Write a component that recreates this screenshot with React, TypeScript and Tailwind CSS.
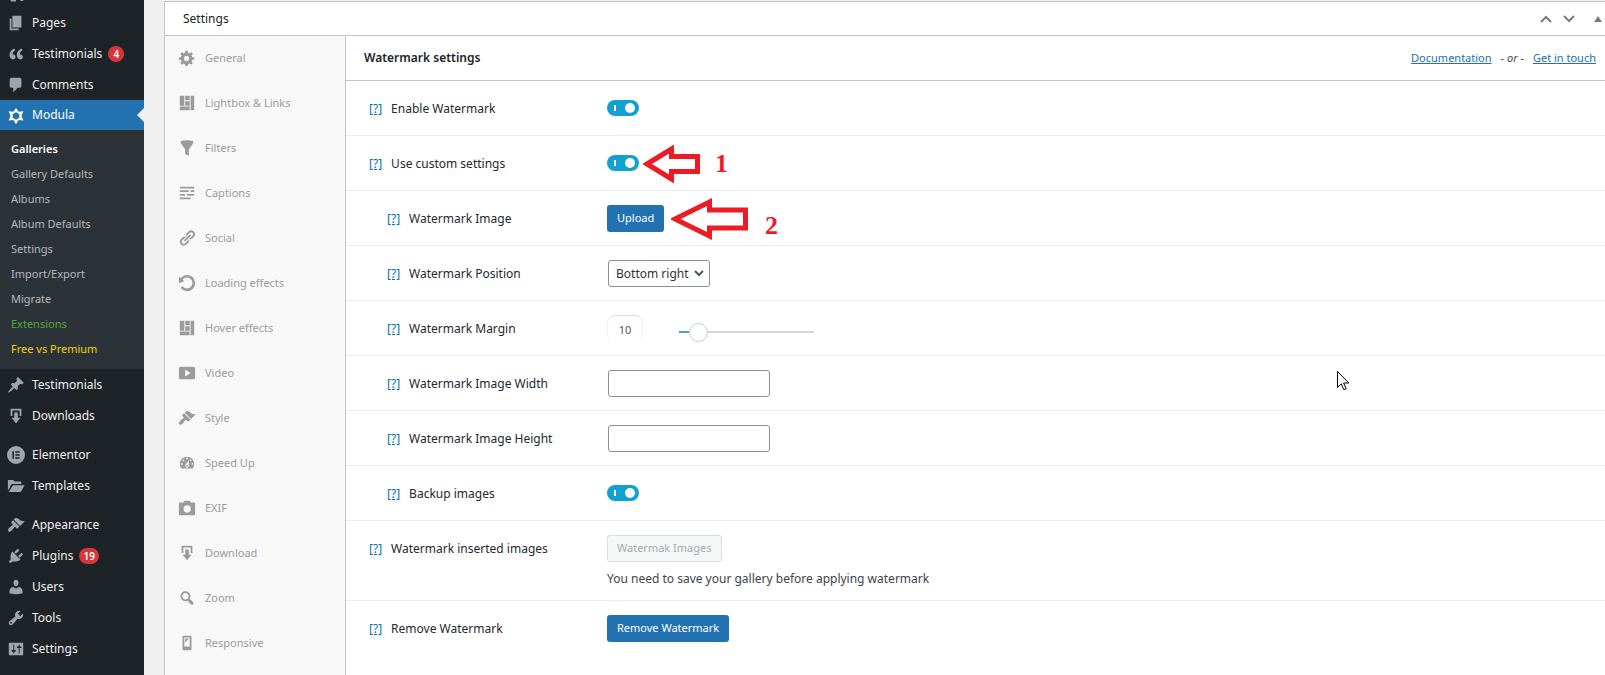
import React, { useState } from 'react';

const paths = {
  page: 'M6 15V2h10v13H6zm-1 1h8v2H3V5h2v11z',
  quote:
    'M9.49 13.22c0-.74-.2-1.38-.61-1.9-.62-.78-1.83-.88-2.53-.72-.29-1.65 1.11-3.75 2.92-4.65L7.88 4c-2.73 1.3-5.42 4.28-4.96 8.05C3.21 14.43 4.59 16 6.54 16c.85 0 1.56-.25 2.12-.75s.83-1.18.83-2.03zm8.05 0c0-.74-.2-1.38-.61-1.9-.63-.78-1.83-.88-2.53-.72-.29-1.65 1.11-3.75 2.92-4.65L15.93 4c-2.73 1.3-5.41 4.28-4.95 8.05.29 2.38 1.66 3.95 3.61 3.95.85 0 1.56-.25 2.12-.75s.83-1.18.83-2.03z',
  comment:
    'M5 2h9c1.1 0 2 .9 2 2v7c0 1.1-.9 2-2 2h-2l-5 5v-5H5c-1.1 0-2-.9-2-2V4c0-1.1.9-2 2-2z',
  modula:
    'M10 0l2.9 4.2 5.3-.5-2.2 5 2.2 5.1-5.3-.4L10 18l-2.9-4.6-5.3.4L4 8.7l-2.2-5 5.3.5zM10 4.600L6.300 6.700v4.200L10 13l3.700-2.100V6.700z',
  pin: 'M10.44 3.02l1.82-1.82 6.36 6.35-1.83 1.82c-1.05-.68-2.48-.57-3.41.36l-.75.75c-.92.93-1.04 2.35-.35 3.41l-1.83 1.82-2.41-2.41-2.8 2.79c-.42.42-3.38 2.71-3.8 2.29s1.86-3.39 2.28-3.81l2.79-2.79L4.1 9.36l1.83-1.82c1.05.69 2.48.57 3.4-.36l.75-.75c.93-.92 1.05-2.35.36-3.41z',
  download: 'M14.01 4v6h2V2H4v8h2.01V4h8zm-2 2v6h3l-5 6-5-6h3V6h4z',
  elementor:
    'M10 0a10 10 0 1 0 0 20a10 10 0 1 0 0-20zM6 5.800h1.700v8.400H6zM9.200 5.800H14v1.700H9.200zM9.200 9.150H14v1.700H9.200zM9.200 12.500H14v1.700H9.200z',
  folder:
    'M1 15.500V4.500C1 3.700 1.500 3.300 2.200 3.300h4.600l1.700 1.800h6.300c.8 0 1.200.5 1.200 1.200v1.500H6.300c-.8 0-1.300.3-1.700.9zM2 16.600l4-6.500c.3-.5.7-.8 1.300-.8H19.500l-3.500 6.300c-.4.700-.8 1-1.500 1z',
  brush:
    'M14.48 11.06L7.41 3.99l1.5-1.5c.5-.56 2.3-.47 3.51.32 1.21.8 1.43 1.28 2.91 2.1 1.18.64 2.45 1.26 4.45.85zm-.71.71L6.7 4.7 4.93 6.47c-.39.39-.39 1.02 0 1.41l1.06 1.06c.39.39.39 1.03 0 1.42-.6.6-1.43 1.11-2.21 1.69-.35.26-.7.53-1.01.84C1.43 14.23.4 16.08 1.4 17.07c.99 1 2.84-.03 4.18-1.36.31-.31.58-.66.85-1.02.57-.78 1.08-1.61 1.69-2.21.39-.39 1.02-.39 1.41 0l1.06 1.06c.39.39 1.02.39 1.41 0z',
  plug: 'M13.11 4.36L9.87 7.6 8 5.73l3.24-3.24c.35-.34 1.05-.2 1.56.32.52.51.66 1.21.31 1.55zm-8 1.77l.91-1.12 9.01 9.01-1.19.84c-.71.71-2.63 1.16-3.82 1.16H6.14L4.9 17.26c-.59.59-1.54.59-2.12 0-.59-.58-.59-1.53 0-2.12l1.24-1.24v-3.88c0-1.13.4-3.19 1.09-3.89zm7.26 3.97l3.24-3.24c.34-.35 1.04-.21 1.55.31.52.51.66 1.21.31 1.55l-3.24 3.25z',
  user: 'M10 9.25c-2.27 0-2.73-3.44-2.73-3.44C7 4.02 7.82 2 9.97 2c2.16 0 2.98 2.02 2.71 3.81 0 0-.41 3.44-2.68 3.44zm0 2.57L12.72 10c2.39 0 4.52 2.33 4.52 4.53v2.49s-3.65 1.13-7.24 1.13c-3.65 0-7.24-1.13-7.24-1.13v-2.49c0-2.25 1.94-4.48 4.47-4.48z',
  wrench:
    'M16.68 9.77c-1.34 1.34-3.3 1.67-4.95.99l-5.41 6.52c-.99.99-2.59.99-3.58 0s-.99-2.59 0-3.57l6.52-5.42c-.68-1.65-.35-3.61.99-4.95 1.28-1.28 3.12-1.62 4.72-1.06l-2.89 2.89 2.82 2.82 2.86-2.87c.53 1.58.18 3.39-1.08 4.65zM3.81 16.21c.4.39 1.04.39 1.43 0 .4-.4.4-1.04 0-1.43-.39-.4-1.03-.4-1.43 0-.39.39-.39 1.03 0 1.43z',
  sliders:
    'M18 16V4c0-.55-.45-1-1-1H3c-.55 0-1 .45-1 1v12c0 .55.45 1 1 1h14c.55 0 1-.45 1-1zM8 11h1c.55 0 1 .45 1 1s-.45 1-1 1H8v1.5c0 .28-.22.5-.5.5s-.5-.22-.5-.5V13H6c-.55 0-1-.45-1-1s.45-1 1-1h1V5.500c0-.28.22-.5.5-.5s.5.22.5.5V11zm5-2h-1c-.55 0-1-.45-1-1s.45-1 1-1h1V5.500c0-.28.22-.5.5-.5s.5.22.5.5V7h1c.55 0 1 .45 1 1s-.45 1-1 1h-1v5.500c0 .28-.22.5-.5.5s-.5-.22-.5-.5V9z',
  gear: 'M18 12h-2.18c-.17.7-.44 1.35-.81 1.93l1.54 1.54-2.1 2.1-1.54-1.54c-.58.36-1.23.63-1.91.79V19H8v-2.18c-.68-.16-1.33-.43-1.91-.79l-1.54 1.54-2.12-2.12 1.54-1.54c-.36-.58-.63-1.23-.79-1.91H1V9.030h2.170c.16-.7.44-1.35.8-1.940L2.430 5.550l2.100-2.100 1.540 1.540c.58-.37 1.240-.64 1.930-.81V2h3v2.180c.68.160 1.330.43 1.910.79l1.540-1.540 2.120 2.120-1.540 1.540c.36.590.64 1.240.8 1.940H18V12zm-8.500 1.500c1.660 0 3-1.340 3-3s-1.340-3-3-3-3 1.340-3 3 1.340 3 3 3z',
  layout: 'M2 2h5v11H2V2zm6 0h5v5H8V2zm6 0h4v16h-4V2zM8 8h5v5H8V8zm-6 6h11v4H2v-4z',
  filter: 'M3 4.5v-2s3.34-1 7-1 7 1 7 1v2l-5 7.030v6.970s-1.220-.09-2.250-.59S8 16.500 8 16.500v-4.970z',
  text: 'M18 3v2H2V3h16zm-6 4v2H2V7h10zm6 0v2h-4V7h4zM8 11v2H2v-2h6zm10 0v2h-8v-2h8zm-4 4v2H2v-2h12z',
  link: 'M17.74 2.76c1.68 1.69 1.68 4.41 0 6.1l-1.53 1.52c-1.12 1.12-2.7 1.47-4.14 1.09l2.62-2.61.76-.77.76-.76c.84-.84.84-2.2 0-3.04-.84-.85-2.2-.85-3.04 0l-.77.76-3.38 3.38c-.37-1.44-.02-3.02 1.1-4.14l1.52-1.53c1.69-1.68 4.42-1.68 6.1 0zM8.59 13.43l5.34-5.34c.42-.42.42-1.1 0-1.52-.44-.43-1.13-.39-1.53 0l-5.33 5.34c-.42.42-.42 1.1 0 1.52.44.43 1.13.39 1.52 0zm-.76 2.29l4.14-4.15c.38 1.44.03 3.02-1.09 4.14l-1.52 1.53c-1.69 1.68-4.41 1.68-6.1 0-1.68-1.68-1.68-4.42 0-6.1l1.53-1.52c1.12-1.12 2.7-1.47 4.14-1.1l-4.14 4.15c-.85.84-.85 2.2 0 3.05.84.84 2.2.84 3.04 0z',
  rotate:
    'M10.25 1.02c5.1 0 8.75 4.04 8.75 9s-3.65 9-8.75 9c-3.2 0-6.02-1.59-7.68-3.99l2.59-1.52c1.1 1.5 2.86 2.51 4.84 2.51 3.3 0 6-2.79 6-6s-2.7-6-6-6c-1.97 0-3.72 1-4.82 2.49L7 8.02l-6 2v-7L2.89 4.6c1.69-2.17 4.36-3.58 7.36-3.58z',
  video:
    'M19 15V5c0-1.100-.9-2-2-2H3c-1.100 0-2 .9-2 2v10c0 1.100.9 2 2 2h14c1.100 0 2-.9 2-2zM8 14V6l6 4z',
  gauge:
    'M3.76 16h12.48c1.1-1.37 1.76-3.11 1.76-5 0-4.42-3.58-8-8-8s-8 3.58-8 8c0 1.89.66 3.63 1.76 5zM10 4c.55 0 1 .45 1 1s-.45 1-1 1-1-.45-1-1 .45-1 1-1zM6 6c.55 0 1 .45 1 1s-.45 1-1 1-1-.45-1-1 .45-1 1-1zm8 0c.55 0 1 .45 1 1s-.45 1-1 1-1-.45-1-1 .45-1 1-1zm-5.37 5.55L12 7v6c0 1.1-.9 2-2 2s-2-.9-2-2c0-.57.24-1.08.63-1.45zM4 10c.55 0 1 .45 1 1s-.45 1-1 1-1-.45-1-1 .45-1 1-1zm12 0c.55 0 1 .45 1 1s-.45 1-1 1-1-.45-1-1 .45-1 1-1zm-5 3c0-.55-.45-1-1-1s-1 .45-1 1 .45 1 1 1 1-.45 1-1z',
  camera:
    'M2 4h4l1.500-2h5.500l1.500 2H18c.6 0 1 .4 1 1v12c0 .6-.4 1-1 1H2c-.6 0-1-.4-1-1V5c0-.6.4-1 1-1zM10.200 7a4 4 0 1 0 0 8a4 4 0 1 0 0-8z',
  search:
    'M12.14 4.18c1.87 1.87 2.11 4.75.72 6.89.12.1.22.21.36.31.2.16.47.36.81.59.34.24.56.39.66.47.42.31.73.57.94.78.32.32.6.65.84 1 .25.35.44.69.59 1.04.14.35.21.68.18 1-.02.32-.14.59-.36.81s-.49.34-.81.36c-.31.02-.65-.04-.99-.19-.35-.14-.7-.34-1.04-.59-.35-.24-.68-.52-1-.84-.21-.21-.47-.52-.77-.93-.1-.13-.25-.35-.47-.66-.22-.32-.4-.57-.56-.78-.16-.2-.29-.35-.44-.5-2.070 1.090-4.690.76-6.440-.98-2.140-2.150-2.140-5.640 0-7.780 2.150-2.150 5.630-2.150 7.780 0zm-1.410 6.360c1.360-1.370 1.360-3.580 0-4.950-1.370-1.370-3.590-1.370-4.950 0-1.370 1.370-1.370 3.580 0 4.950 1.360 1.370 3.580 1.370 4.950 0z',
  phone:
    'M6 2h8c.55 0 1 .45 1 1v14c0 .55-.45 1-1 1H6c-.55 0-1-.45-1-1V3c0-.55.45-1 1-1zm7 12V4H7v10h6zM8 5h4l-4 5V5z',
  media: 'M13 11V4c0-.55-.45-1-1-1h-1.670L9 1H5L3.670 3H2c-.55 0-1 .45-1 1v7c0 .55.45 1 1 1h10c.55 0 1-.45 1-1zM14 6h5v10.500c0 1.380-1.120 2.500-2.500 2.500S14 17.880 14 16.500s1.120-2.500 2.500-2.500c.17 0 .34.02.5.05V9h-3V6zM4 15v-2h6v6.500H4z',
};

type IconName = keyof typeof paths;

function Icon({ name }: { name: IconName }) {
  return (
    <svg viewBox="0 0 20 20" className="size-[18px] shrink-0 fill-current" fillRule="evenodd" aria-hidden="true">
      <path d={paths[name]} />
    </svg>
  );
}

type MenuEntry = { icon: IconName; label: string; count?: number };

const menuTop: MenuEntry[] = [
  { icon: 'page', label: 'Pages' },
  { icon: 'quote', label: 'Testimonials', count: 4 },
  { icon: 'comment', label: 'Comments' },
];
const menuContent: MenuEntry[] = [
  { icon: 'pin', label: 'Testimonials' },
  { icon: 'download', label: 'Downloads' },
];
const menuBuilder: MenuEntry[] = [
  { icon: 'elementor', label: 'Elementor' },
  { icon: 'folder', label: 'Templates' },
];
const menuSystem: MenuEntry[] = [
  { icon: 'brush', label: 'Appearance' },
  { icon: 'plug', label: 'Plugins', count: 19 },
  { icon: 'user', label: 'Users' },
  { icon: 'wrench', label: 'Tools' },
  { icon: 'sliders', label: 'Settings' },
];

const submenu = [
  { label: 'Galleries', tone: 'font-semibold text-white' },
  { label: 'Gallery Defaults', tone: 'text-[#b4b9be]' },
  { label: 'Albums', tone: 'text-[#b4b9be]' },
  { label: 'Album Defaults', tone: 'text-[#b4b9be]' },
  { label: 'Settings', tone: 'text-[#b4b9be]' },
  { label: 'Import/Export', tone: 'text-[#b4b9be]' },
  { label: 'Migrate', tone: 'text-[#b4b9be]' },
  { label: 'Extensions', tone: 'text-[#52a838]' },
  { label: 'Free vs Premium', tone: 'text-[#f5cf0a]' },
];

const tabs: { icon: IconName; label: string }[] = [
  { icon: 'gear', label: 'General' },
  { icon: 'layout', label: 'Lightbox & Links' },
  { icon: 'filter', label: 'Filters' },
  { icon: 'text', label: 'Captions' },
  { icon: 'link', label: 'Social' },
  { icon: 'rotate', label: 'Loading effects' },
  { icon: 'layout', label: 'Hover effects' },
  { icon: 'video', label: 'Video' },
  { icon: 'brush', label: 'Style' },
  { icon: 'gauge', label: 'Speed Up' },
  { icon: 'camera', label: 'EXIF' },
  { icon: 'download', label: 'Download' },
  { icon: 'search', label: 'Zoom' },
  { icon: 'phone', label: 'Responsive' },
];

function MenuGroup({ entries }: { entries: MenuEntry[] }) {
  return (
    <ul>
      {entries.map((entry) => (
        <li key={entry.label}>
          <a href="#" className="flex h-[31px] items-center pt-px pl-[7px] text-[12px] text-[#f0f0f1]">
            <span className="flex text-[#a0a5aa]">
              <Icon name={entry.icon} />
            </span>
            <span className="ml-[7px]">{entry.label}</span>
            {entry.count !== undefined && (
              <span className="ml-1.5 flex h-4 min-w-4 items-center justify-center rounded-full bg-[#d63638] px-1 text-[10px] font-semibold text-white">
                {entry.count}
              </span>
            )}
          </a>
        </li>
      ))}
    </ul>
  );
}

function Sidebar() {
  return (
    <nav className="w-36 shrink-0 overflow-hidden bg-[#1d2327]" aria-label="Admin menu">
      <div className="flex h-[7px] items-end overflow-hidden pb-[5px] pl-[7px] text-[#a0a5aa]">
        <Icon name="media" />
      </div>
      <MenuGroup entries={menuTop} />
      <a href="#" className="flex h-[30px] items-center bg-[#2271b1] pl-[7px] text-[12px] text-white">
        <span className="flex pt-1">
          <Icon name="modula" />
        </span>
        <span className="ml-[7px]">Modula</span>
        <svg viewBox="0 0 7 14" className="ml-auto h-3.5 w-[7px] fill-[#f0f0f1]" aria-hidden="true">
          <path d="M7 0v14L0 7z" />
        </svg>
      </a>
      <ul className="h-[239px] bg-[#2c3338] pt-[7px] text-[11px]">
        {submenu.map((item) => (
          <li key={item.label}>
            <a href="#" className={`flex h-[25px] items-center pl-[11px] ${item.tone}`}>
              {item.label}
            </a>
          </li>
        ))}
      </ul>
      <div className="flex flex-col gap-2">
        <MenuGroup entries={menuContent} />
        <MenuGroup entries={menuBuilder} />
        <MenuGroup entries={menuSystem} />
      </div>
    </nav>
  );
}

function Toggle({ id }: { id: string }) {
  return (
    <input
      id={id}
      type="checkbox"
      role="switch"
      defaultChecked
      className="mb-px flex h-4 w-8 cursor-pointer appearance-none items-center justify-between rounded-full bg-[#8c8f94] pr-1 pl-[7px] before:h-1.5 before:w-0.5 before:bg-white after:size-2.5 after:rounded-full after:bg-white checked:bg-[#11a0d2]"
    />
  );
}

type RowProps = {
  label: string;
  htmlFor: string;
  nested?: boolean;
  last?: boolean;
  children: React.ReactNode;
};

function Row({ label, htmlFor, nested = false, last = false, children }: RowProps) {
  return (
    <div className={`flex items-start pt-3.5 pb-[13px] ${last ? '' : 'border-b border-[#ebebeb]'}`}>
      <div className={`flex h-[27px] w-[261px] shrink-0 items-center gap-[9px] ${nested ? 'pl-[41px]' : 'pl-[23px]'}`}>
        <a href="#" className="text-[12px] text-[#0073aa] underline" aria-label={`Help: ${label}`}>
          [?]
        </a>
        <label htmlFor={htmlFor} className="text-[12px] whitespace-nowrap text-[#23282d]">
          {label}
        </label>
      </div>
      <div className="relative flex min-h-[27px] flex-col items-start justify-center">{children}</div>
    </div>
  );
}

function App() {
  const [margin, setMargin] = useState(10);
  return (
    <div className="flex min-h-screen bg-[#f0f0f1] font-['Noto_Sans',sans-serif]">
      <Sidebar />
      <main className="relative flex min-w-0 flex-1 flex-col pt-px pl-5">
        <section className="flex flex-1 flex-col border-t border-l border-[#c3c4c7] bg-white">
          <header className="flex h-[34px] items-center justify-between border-b border-[#c3c4c7] pr-[3px] pl-[18px]">
            <h2 className="pt-px text-[12px] text-[#1d2327]">Settings</h2>
            <div className="flex items-center text-[#787c82]">
              <button type="button" aria-label="Move up" className="mr-[11px]">
                <svg viewBox="0 0 12 8" className="h-2 w-3 fill-none stroke-current stroke-2">
                  <path d="M1 7l5-5 5 5" />
                </svg>
              </button>
              <button type="button" aria-label="Move down" className="mr-[19px]">
                <svg viewBox="0 0 12 8" className="h-2 w-3 fill-none stroke-current stroke-2">
                  <path d="M1 1l5 5 5-5" />
                </svg>
              </button>
              <button type="button" aria-label="Toggle panel">
                <svg viewBox="0 0 8 6" className="h-1.5 w-2 fill-current">
                  <path d="M4 0l4 6H0z" />
                </svg>
              </button>
            </div>
          </header>

          <div className="flex flex-1">
            <ul className="w-[181px] shrink-0 border-r border-[#c3c4c7] bg-[#f8f8f8]">
              {tabs.map((tab) => (
                <li key={tab.label}>
                  <a href="#" className="flex h-[45px] items-center gap-[9px] pb-px pl-[13px] text-[11px] text-[#9b9b9b]">
                    <Icon name={tab.icon} />
                    {tab.label}
                  </a>
                </li>
              ))}
            </ul>

            <div className="min-w-0 flex-1">
              <div className="flex h-[45px] items-center justify-between border-b border-[#c3c4c7] pr-[9px] pl-[18px]">
                <h3 className="text-[12px] font-semibold text-[#1d2327]">Watermark settings</h3>
                <p className="flex gap-[9px] text-[11px] text-[#3c434a]">
                  <a href="#" className="text-[#2271b1] underline">
                    Documentation
                  </a>
                  <span>
                    - <em>or</em> -
                  </span>
                  <a href="#" className="text-[#2271b1] underline">
                    Get in touch
                  </a>
                </p>
              </div>

              <Row label="Enable Watermark" htmlFor="enable">
                <Toggle id="enable" />
              </Row>
              <Row label="Use custom settings" htmlFor="custom">
                <Toggle id="custom" />
                <div className="absolute -top-1.5 left-9 flex items-center gap-3.5">
                  <svg viewBox="0 0 58 38" className="h-[38px] w-[58px] fill-none stroke-[#ed1c24] stroke-[5]">
                    <path d="M4 19L28.500 4v7.500H54.500v15H28.500V34z" />
                  </svg>
                  <span className="font-['Liberation_Serif',serif] text-[26px] font-bold text-[#ed1c24]">1</span>
                </div>
              </Row>
              <Row label="Watermark Image" htmlFor="upload" nested>
                <button id="upload" type="button" className="h-[27px] rounded-[3px] bg-[#2271b1] px-2.5 text-[11px] text-white">
                  Upload
                </button>
                <div className="absolute -top-[7px] left-16 flex items-end gap-4">
                  <svg viewBox="0 0 78 42" className="h-[42px] w-[78px] fill-none stroke-[#ed1c24] stroke-[5]">
                    <path d="M4 21L38.500 4v8H74.500v18H38.500V38z" />
                  </svg>
                  <span className="font-['Liberation_Serif',serif] text-[26px] leading-7 font-bold text-[#ed1c24]">2</span>
                </div>
              </Row>
              <Row label="Watermark Position" htmlFor="position" nested>
                <div className="relative ml-px">
                  <select
                    id="position"
                    className="block h-[27px] w-[102px] appearance-none rounded-[3px] border border-[#8c8f94] bg-white pl-[7px] text-[12px] text-[#2c3338]"
                  >
                    <option>Bottom right</option>
                    <option>Bottom left</option>
                    <option>Top right</option>
                    <option>Top left</option>
                    <option>Center</option>
                  </select>
                  <svg
                    viewBox="0 0 10 7"
                    className="pointer-events-none absolute top-2.5 right-1.5 h-[7px] w-2.5 fill-none stroke-[#50575e] stroke-2"
                    aria-hidden="true"
                  >
                    <path d="M1 1l4 4 4-4" />
                  </svg>
                </div>
              </Row>
              <Row label="Watermark Margin" htmlFor="margin" nested>
                <div className="flex items-center gap-9">
                  <input
                    id="margin"
                    type="text"
                    value={margin}
                    onChange={(e) => setMargin(Number(e.target.value) || 0)}
                    className="h-[27px] w-9 rounded-lg border border-b-0 border-[#dddddd] [border-right-color:#f0f0f0] [border-left-color:#f0f0f0] text-center text-[11px] text-[#50575e]"
                  />
                  <input
                    type="range"
                    aria-label="Watermark Margin slider"
                    min={0}
                    max={120}
                    value={margin}
                    onChange={(e) => setMargin(Number(e.target.value))}
                    className="mt-[7px] h-[18px] w-[135px] appearance-none bg-[linear-gradient(#4aa3cf,#4aa3cf),linear-gradient(#d5d5d5,#d5d5d5)] bg-[length:10%_2px,100%_2px] bg-[position:left_center,left_center] bg-no-repeat [&::-webkit-slider-thumb]:size-[19px] [&::-webkit-slider-thumb]:appearance-none [&::-webkit-slider-thumb]:rounded-full [&::-webkit-slider-thumb]:border [&::-webkit-slider-thumb]:border-[#cccccc] [&::-webkit-slider-thumb]:bg-white"
                  />
                </div>
              </Row>
              <Row label="Watermark Image Width" htmlFor="width" nested>
                <input id="width" type="text" className="ml-px h-[27px] w-[162px] rounded-[3px] border border-[#8c8f94] px-2 text-[12px]" />
              </Row>
              <Row label="Watermark Image Height" htmlFor="height" nested>
                <input id="height" type="text" className="ml-px h-[27px] w-[162px] rounded-[3px] border border-[#8c8f94] px-2 text-[12px]" />
              </Row>
              <Row label="Backup images" htmlFor="backup" nested>
                <Toggle id="backup" />
              </Row>
              <Row label="Watermark inserted images" htmlFor="apply">
                <button
                  id="apply"
                  type="button"
                  disabled
                  className="h-[27px] rounded-[3px] border border-[#dcdcde] bg-[#f6f7f7] px-[9px] text-[11px] text-[#a7aaad]"
                >
                  Watermak Images
                </button>
                <p className="mt-2 text-[12px] leading-[17px] text-[#3c434a]">
                  You need to save your gallery before applying watermark
                </p>
              </Row>
              <Row label="Remove Watermark" htmlFor="remove" last>
                <button id="remove" type="button" className="h-[27px] rounded-[3px] bg-[#2271b1] px-2.5 text-[11px] text-white">
                  Remove Watermark
                </button>
              </Row>
            </div>
          </div>
        </section>

        <svg viewBox="0 0 13 20" className="absolute top-[371px] left-[1193px] h-5 w-[13px] fill-white stroke-black" aria-hidden="true">
          <path d="M.5.500v16l3.700-3.600 2.600 5.800 2.400-1-2.600-5.700h5.300z" />
        </svg>
      </main>
    </div>
  );
}

export default App;
